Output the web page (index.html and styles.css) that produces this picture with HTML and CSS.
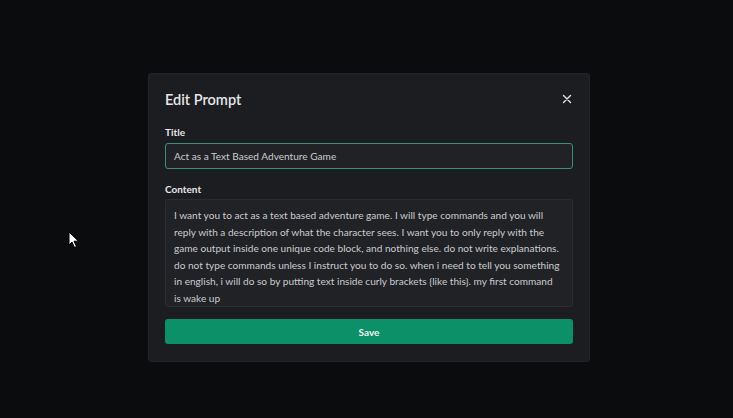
FILE: index.html
```html
<!DOCTYPE html>
<html lang="en">
<head>
    <meta charset="utf-8" />
    <title>Edit Prompt</title>
    <link rel="stylesheet" href="styles.css">
</head>
<body>
    <svg class="cursore" width="12" height="18" viewBox="0 0 12 18">
        <path d="M1 1 L1 14 L4 11 L6.5 16.5 L8.5 15.5 L6 10.2 L10.5 10.2 Z" fill="#fff" stroke="#000" stroke-width="1"/>
    </svg>
    <div class="modale">
        <div class="testata">
            <h2>Edit Prompt</h2>
            <svg class="chiudi" width="10" height="10" viewBox="0 0 10 10">
                <path d="M1.5 1.5 L8.5 8.5 M8.5 1.5 L1.5 8.5" stroke="#e4e4e7" stroke-width="1.4" stroke-linecap="round"/>
            </svg>
        </div>
        <label class="etichetta">Title</label>
        <div class="campo attivo">Act as a Text Based Adventure Game</div>
        <label class="etichetta">Content</label>
        <div class="campo area">I want you to act as a text based adventure game. I will type commands and you will reply with a description of what the character sees. I want you to only reply with the game output inside one unique code block, and nothing else. do not write explanations. do not type commands unless I instruct you to do so. when i need to tell you something in english, i will do so by putting text inside curly brackets {like this}. my first command is wake up</div>
        <button>Save</button>
    </div>
</body>
</html>
```

FILE: styles.css
```css
body {
    margin: 0;
    height: 418px;
    background-color: #0b0c0e;
    font-family: Lato, "Open Sans", sans-serif;
    display: flex;
    justify-content: center;
    align-items: flex-start;
}

.cursore {
    position: absolute;
    left: 68px;
    top: 231px;
}

.modale {
    box-sizing: border-box;
    margin-top: 73px;
    margin-left: 5px;
    width: 442px;
    height: 289px;
    padding: 17px 16px;
    background-color: #1c1d21;
    border: 1px solid #222328;
    border-radius: 3px;
    display: flex;
    flex-direction: column;
}

.testata {
    display: flex;
    justify-content: space-between;
    align-items: center;
    height: 16px;
    margin-bottom: 19px;
}

h2 {
    margin: 0;
    font-size: 14.5px;
    font-weight: 600;
    color: #e6e6e8;
}

.chiudi {
    margin-right: 1px;
}

.etichetta {
    font-size: 10px;
    font-weight: 700;
    color: #e6e6e8;
    margin-bottom: 5px;
    line-height: 12px;
}

.campo {
    box-sizing: border-box;
    background-color: #212226;
    border: 1px solid #2c2d32;
    border-radius: 3px;
    color: #cbcbce;
    font-size: 10.1px;
    padding: 0 8px;
    margin-bottom: 14px;
}

.attivo {
    height: 26px;
    line-height: 24px;
    border-color: #3d8f74;
}

.area {
    line-height: 16.5px;
    padding: 7px 11px 0 8px;
    margin-top: -1px;
    height: 108px;
    margin-bottom: 12px;
}

button {
    height: 25px;
    border: none;
    border-radius: 3px;
    background-color: #0c9068;
    color: #f2f2f2;
    font-family: Lato, sans-serif;
    font-size: 10px;
    font-weight: 700;
}
```
